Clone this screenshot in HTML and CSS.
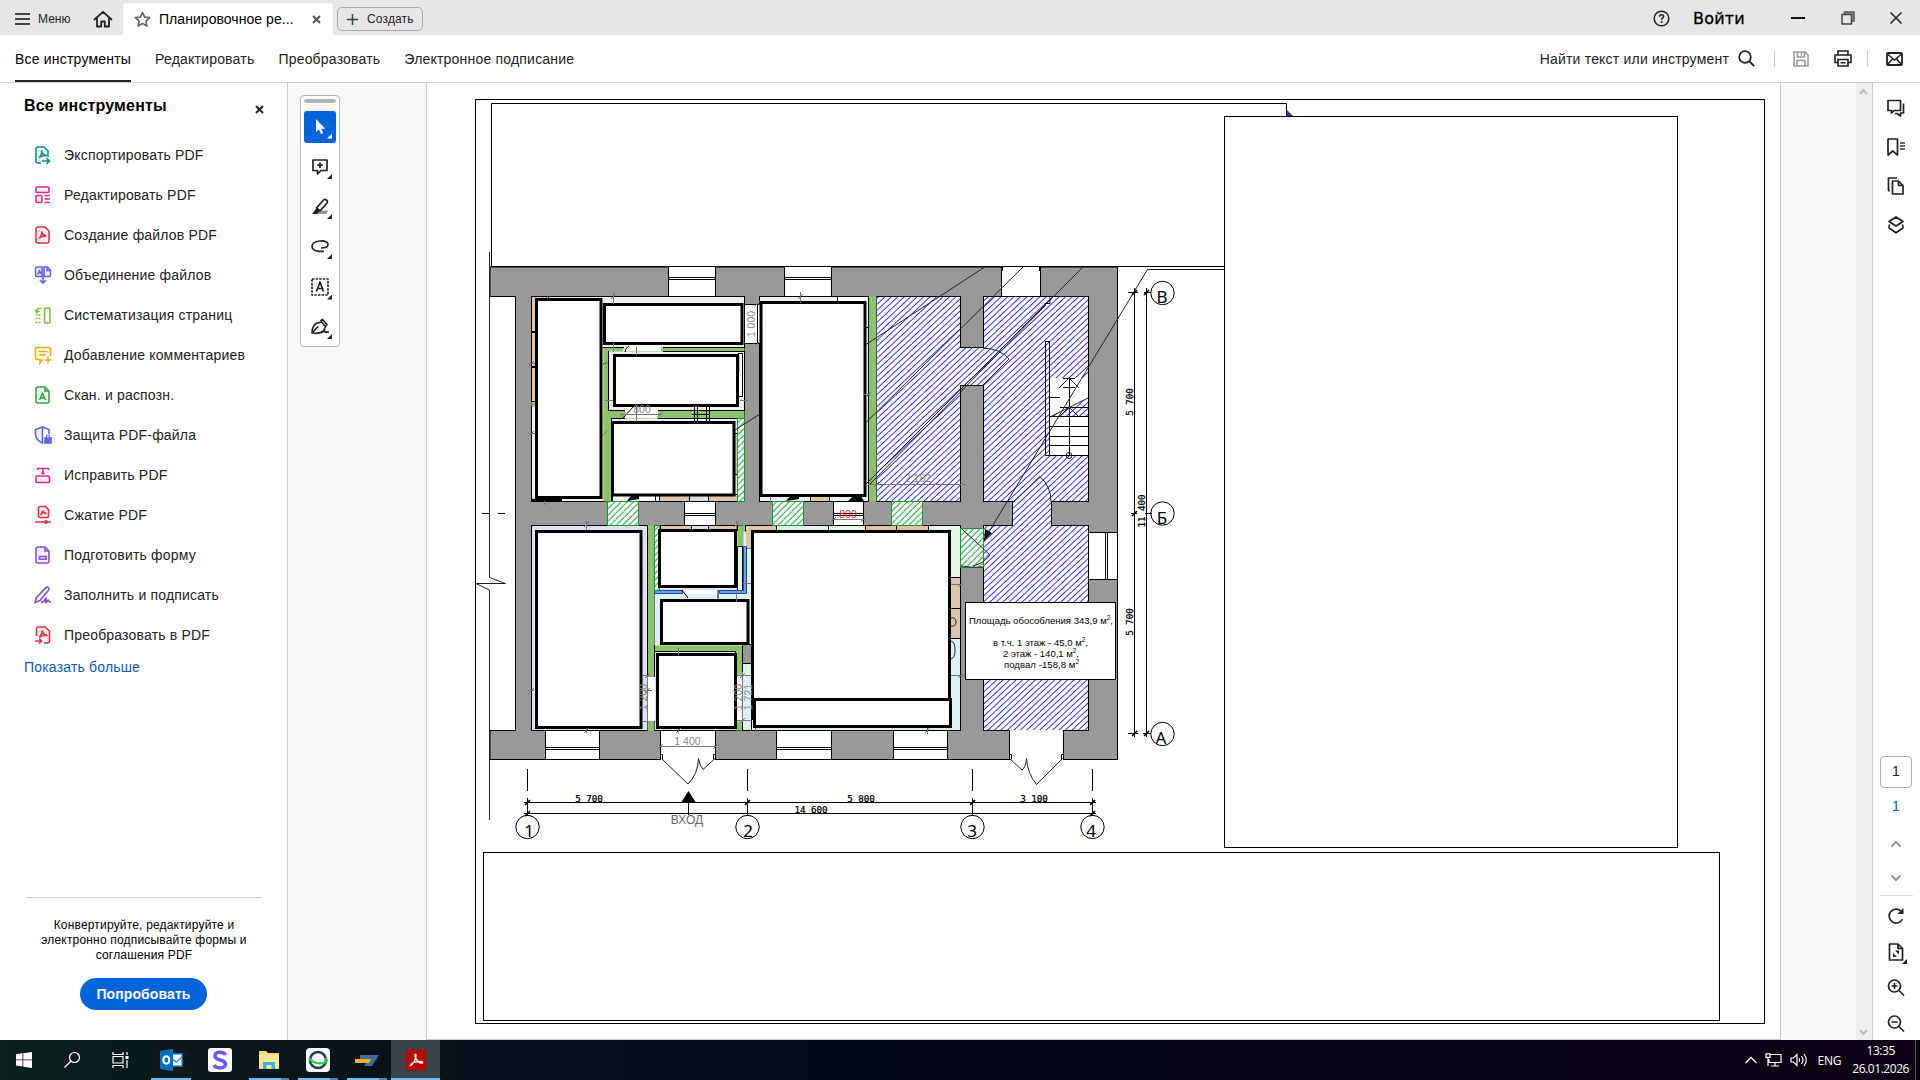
FILE: index.html
```html
<!DOCTYPE html>
<html lang="ru">
<head>
    <meta charset="UTF-8">
    <meta name="viewport" content="width=device-width, initial-scale=1.0">
    <title>Планировочное решение</title>
    <link rel="stylesheet" href="styles.css">
</head>
<body>
    <!-- Title bar -->
    <header class="titlebar">
        <div class="menu">
            <svg width="16" height="14" viewBox="0 0 16 14"><path d="M0 2h15M0 7h15M0 12h15" stroke="#444" stroke-width="1.8"/></svg>
            <span>Меню</span>
        </div>
        <svg class="home" width="20" height="18" viewBox="0 0 20 18"><path d="M1.5 9.5 10 1.8l8.500 7.700M4 8v8.500h4.200v-5h3.600v5H16V8" fill="none" stroke="#222" stroke-width="1.8" stroke-linejoin="round" stroke-linecap="round"/></svg>
        <div class="tab">
            <svg width="17" height="17" viewBox="0 0 17 17"><path d="M8.500 1.500l2.100 4.600 5 .6-3.700 3.400 1 5-4.400-2.500-4.400 2.500 1-5L1.400 6.700l5-.6z" fill="none" stroke="#666" stroke-width="1.700" stroke-linejoin="round"/></svg>
            <span class="tab-name">Планировочное ре...</span>
            <svg class="tab-close" width="9" height="9" viewBox="0 0 9 9"><path d="M1 1l7 7M8 1L1 8" stroke="#555" stroke-width="1.800"/></svg>
        </div>
        <button class="create">
            <svg width="11" height="11" viewBox="0 0 11 11"><path d="M5.500 0v11M0 5.500h11" stroke="#444" stroke-width="1.600"/></svg>
            <span>Создать</span>
        </button>
        <div class="window-controls">
            <svg class="help" width="17" height="17" viewBox="0 0 17 17"><circle cx="8.500" cy="8.500" r="7.300" fill="none" stroke="#222" stroke-width="1.500"/><path d="M6.500 6.700c0-1.400.9-2 2-2s2.100.7 2.100 1.800c0 1.400-2 1.500-2 3.200" fill="none" stroke="#222" stroke-width="1.500"/><circle cx="8.600" cy="12" r="1" fill="#222"/></svg>
            <span class="login">Войти</span>
            <svg class="wmin" width="14" height="14" viewBox="0 0 14 14"><path d="M0 7h14" stroke="#111" stroke-width="2"/></svg>
            <svg class="wmax" width="14" height="14" viewBox="0 0 14 14"><path d="M3.500 3.500v-2.500h9.500v9h-2.500" fill="#999" stroke="#555" stroke-width="1.500"/><path d="M1 3.500h9.500V13H1z" fill="#e6e6e6" stroke="#444" stroke-width="1.500"/></svg>
            <svg class="wclose" width="12" height="12" viewBox="0 0 12 12"><path d="M.5.5l11 11M11.500.5l-11 11" stroke="#222" stroke-width="1.500"/></svg>
        </div>
    </header>

    <!-- Main toolbar -->
    <nav class="toolbar">
        <a class="active">Все инструменты</a>
        <a>Редактировать</a>
        <a>Преобразовать</a>
        <a>Электронное подписание</a>
        <div class="toolbar-right">
            <span class="find">Найти текст или инструмент</span>
            <svg width="17" height="17" viewBox="0 0 17 17"><circle cx="7" cy="7" r="5.800" fill="none" stroke="#222" stroke-width="1.700"/><path d="M11.200 11.200l5 5" stroke="#222" stroke-width="1.900"/></svg>
            <i class="sep sep-first"></i>
            <svg class="save" width="16" height="16" viewBox="0 0 16 16"><path d="M1 1h11l3 3v11H1zM4.500 1v5h7V1M4 15v-5.500h8V15M8.500 2v2.500" fill="none" stroke="#999" stroke-width="1.600"/></svg>
            <svg class="print" width="18" height="17" viewBox="0 0 18 17"><path d="M4 5V1h10v4M4 12.500H1V5h16v7.500h-3M4 9.500h10V16H4zM6.500 12.700h5" fill="none" stroke="#222" stroke-width="1.600"/></svg>
            <i class="sep"></i>
            <svg class="mail" width="17" height="14" viewBox="0 0 17 14"><rect x="1" y="1" width="15" height="12" rx="1" fill="none" stroke="#222" stroke-width="1.800"/><path d="M1.500 2l7 6 7-6M1.500 12.500l5-5.500M15.500 12.500l-5-5.500" fill="none" stroke="#222" stroke-width="1.600"/></svg>
        </div>
    </nav>

    <main class="workspace">
        <!-- Tools panel -->
        <aside class="tools">
            <div class="tools-head">
                <h2>Все инструменты</h2>
                <svg width="9" height="9" viewBox="0 0 9 9"><path d="M1 1l7 7M8 1L1 8" stroke="#222" stroke-width="2"/></svg>
            </div>
            <ul>
                <li><svg class="teal" viewBox="0 0 20 20"><path d="M8 18H5a2 2 0 0 1-2-2V4a2 2 0 0 1 2-2h6l4 4v6" class="soft"/><path d="M6 13c2-2 3-5 2.500-7.500C9 8.500 11 10.500 14 10.500M6 12.500c2-1.200 4-1.800 7-2M9 16h7M13.500 13l3 3-3 3"/></svg>Экспортировать PDF</li>
                <li><svg class="pink" viewBox="0 0 20 20"><rect x="3" y="2" width="13" height="5.500" rx="1" class="soft"/><rect x="3" y="10.500" width="6" height="7" rx="1" class="soft"/><path d="M11.500 10.500H17M11.500 14H17M11.500 17.500H17"/></svg>Редактировать PDF</li>
                <li><svg class="red" viewBox="0 0 20 20"><path d="M5 2h7l4 4v10a2 2 0 0 1-2 2H5a2 2 0 0 1-2-2V4a2 2 0 0 1 2-2z" class="soft"/><path d="M6 13.500c2-2 3-5 2.800-7C9.500 9 11 10.800 13.500 11M6 13c2-1.400 4-2 7-2"/></svg>Создание файлов PDF</li>
                <li><svg class="indigo" viewBox="0 0 20 20"><path d="M9 11.500H4a1.500 1.500 0 0 1-1.500-1.500V3.500A1.500 1.500 0 0 1 4 2h5zM11 11.500h5a1.500 1.500 0 0 0 1.500-1.500V5l-3-3H11zM4.500 9.500c1.200-1 1.800-3 1.800-4.500.4 2 1 3 2.300 3.500M14 2v3.500h3.500" class="soft"/><path d="M10 9v9M7 15l3 3.200 3-3.200"/></svg>Объединение файлов</li>
                <li><svg class="green" viewBox="0 0 20 20"><rect x="11.500" y="3" width="5.500" height="15" rx="1" class="soft"/><path d="M2.500 10h6M2.500 13.500h6M2.500 17.500h6" stroke-dasharray="2 1"/><path d="M8.500 3.500C5.500 2.500 3.800 4 3.500 7M2 4.500L3.500 7.500 6.500 6"/></svg>Систематизация страниц</li>
                <li><svg class="yellow" viewBox="0 0 20 20"><path d="M9.500 14.500L7 18v-3.500H4A1.500 1.500 0 0 1 2.500 13V4A1.500 1.500 0 0 1 4 2.500h12A1.500 1.500 0 0 1 17.500 4v7" class="soft"/><path d="M5.500 6.500h9M5.500 10h7M15 11.500v7M11.500 15h7"/></svg>Добавление комментариев</li>
                <li><svg class="emerald" viewBox="0 0 20 20"><path d="M5 2h7l4 4v10a2 2 0 0 1-2 2H5a2 2 0 0 1-2-2V4a2 2 0 0 1 2-2zM12 2v4h4" class="soft"/><path d="M6.500 15l3-6.500 3 6.500M7.500 13h4"/></svg>Скан. и распозн.</li>
                <li><svg class="indigo" viewBox="0 0 20 20"><path d="M9.500 18C4 15.500 2.500 13 2.500 9V4.500L9.500 2z" class="soft"/><path d="M9.500 2L16 4.500V9"/><rect x="12" y="13" width="6" height="5" fill="currentColor"/><path d="M13.500 13v-1.500a1.500 1.500 0 0 1 3 0V13" stroke-width="1.200"/></svg>Защита PDF-файла</li>
                <li><svg class="pink" viewBox="0 0 20 20"><rect x="3" y="11" width="13.500" height="6.500" rx="1" class="soft"/><path d="M4.500 5V3.500h11V5M10 3.500V8.500M8 8.500h4"/></svg>Исправить PDF</li>
                <li><svg class="red" viewBox="0 0 20 20"><path d="M6.500 1.500h6l3 3v7a1 1 0 0 1-1 1h-8a1 1 0 0 1-1-1v-9a1 1 0 0 1 1-1z" class="soft"/><path d="M7.500 10c1.500-1 2-3 2.200-4.500.5 2 1.500 3 4 3M2 17h16"/><circle cx="13" cy="17" r="1.300" fill="currentColor"/></svg>Сжатие PDF</li>
                <li><svg class="violet" viewBox="0 0 20 20"><path d="M5 2h7l4 4v10a2 2 0 0 1-2 2H5a2 2 0 0 1-2-2V4a2 2 0 0 1 2-2zM12 2v4h4" class="soft"/><path d="M6.500 11.500h6.500v2.700H6.500z"/></svg>Подготовить форму</li>
                <li><svg class="violet" viewBox="0 0 20 20"><path d="M2 17.500l1.500-5L13 2.500c2-1.200 4 .8 2.700 2.500L7 15.500l-5 2z" class="soft"/><path d="M8 17.500c3.500 0 4-4.500 5-4.500s-1.500 4.500 0 4.500 1-2.500 2-2.500 0 2 3 2"/></svg>Заполнить и подписать</li>
                <li><svg class="red" viewBox="0 0 20 20"><path d="M3.500 11V4a2 2 0 0 1 2-2H12l4.500 4v10a2 2 0 0 1-2 2H11" class="soft"/><path d="M6.500 12c2-2 3-4 2.800-6.500C10 9 12 10.500 14.500 10.500M6 12c2-1 4-1.500 7-1.500M2 16h6.500M6 13.500L8.500 16 6 18.500"/></svg>Преобразовать в PDF</li>
            </ul>
            <a class="more">Показать больше</a>
            <div class="promo">
                <p>Конвертируйте, редактируйте и<br>электронно подписывайте формы и<br>соглашения PDF</p>
                <button>Попробовать</button>
            </div>
        </aside>

        <!-- Quick tools -->
        <div class="quick-area">
            <div class="quick">
                <i class="handle"></i>
                <div class="quick-btn selected"><svg viewBox="0 0 32 32"><path d="M12 8v13l3-2.500 2 4.500 2.300-1-2-4.300h4z" fill="#fff"/><path d="M28 22.500v5h-5z" fill="#fff"/></svg></div>
                <div class="quick-btn"><svg viewBox="0 0 32 32"><path d="M9 9h14v10.500h-6L13.500 23v-3.500H9z" class="ln"/><path d="M16 11.500v5.500M13.300 14.200h5.400" class="ln"/><path d="M28 23v5h-5z"/></svg></div>
                <div class="quick-btn"><svg viewBox="0 0 32 32"><path d="M17 19.500h7.500L22 23h-9z" fill="#999"/><path d="M12.500 17l7-8c1.500-1.500 5 .5 3.500 3l-7 8zM12 17.500l3.500 3" class="ln"/><path d="M12 18l3 3-1.500 2H8z"/><path d="M28 23v5h-5z"/></svg></div>
                <div class="quick-btn"><svg viewBox="0 0 32 32"><path d="M17 17c5 0 7-1.500 7-3.500 0-3-4-4-8-3.500-5 .6-8 3-8 5.500s3 4.800 7 4.800h5" class="ln"/><path d="M28 23v5h-5z"/></svg></div>
                <div class="quick-btn"><svg viewBox="0 0 32 32"><rect x="8" y="8" width="16" height="16" class="ln" stroke-dasharray="2.400 1.200"/><path d="M12.500 20.500l3.500-9.500 3.500 9.500M13.500 17.500h5" class="ln"/><path d="M28 23.500v5h-5z"/></svg></div>
                <div class="quick-btn"><svg viewBox="0 0 32 32"><path d="M8 22c0-5 1-8 5-10l4.500-1 4 4.500-2 4.500c-3 2-7 3-11.500 2zM8 22l6-6.500M16.500 10l2-1.500 4.500 5-1.500 2M17 22c2-1 3-2 3.500-2s0 1.500 1 1.500 1-1 3.500-.5" class="ln"/><path d="M28 23v5h-5z"/></svg></div>
            </div>
        </div>

        <!-- Document page -->
        <section class="page">
            <svg class="plan" viewBox="427 83 1353 956" width="1353" height="956">
                <defs>
                    <pattern id="hb" width="4.400" height="4.400" patternUnits="userSpaceOnUse" patternTransform="rotate(-43)"><path d="M0 2.200h4.400" stroke="#2626ff" stroke-width="0.950"/></pattern>
                    <pattern id="hg" width="4.400" height="4.400" patternUnits="userSpaceOnUse" patternTransform="rotate(-45)"><rect width="4.400" height="4.400" fill="#fff"/><path d="M0 2h4.400" stroke="#16a035" stroke-width="1"/></pattern>
                </defs>

                <!-- frames -->
                <g class="frame">
                    <rect x="475.500" y="99.500" width="1289" height="924"/>
                    <path d="M1286.500 117V103.500H491.500V266.500H1224"/>
                    <rect x="1224.500" y="116.500" width="453" height="731"/>
                    <rect x="483.500" y="852.500" width="1236" height="168"/>
                </g>
                <path d="M1287 110l6 6h-6z" fill="#1c3fa8"/>

                <!-- walls -->
                <path class="wall" d="M490 267H1117.500V759.500H490V730.500H515.500V296.500H490z"/>
                <!-- rooms -->
                <g class="room">
                    <rect x="531.500" y="296.500" width="213" height="205" fill="#efefef"/>
                    <rect x="759.500" y="296.500" width="109" height="205" fill="#efefef"/>
                    <rect x="531.500" y="525.500" width="116" height="205" fill="#dde3f1"/>
                    <rect x="654.500" y="525.500" width="88" height="205" fill="#dde3f1"/>
                    <rect x="745.500" y="525.500" width="215" height="205" fill="#dcf1f1"/>
                    <rect x="876.500" y="296.500" width="84" height="205" fill="#fff"/>
                    <rect x="983.500" y="296.500" width="105" height="205" fill="#fff"/>
                    <rect x="983.500" y="525.500" width="105" height="205" fill="#fff"/>
                </g>
                <g fill="#fff">
                    <rect x="960" y="348" width="24" height="37"/>
                    <rect x="1013" y="501" width="38" height="26"/>
                </g>
                <path fill="url(#hb)" d="M877 297h83v51h24V297h104v204h-37v25h37v204H984V526h29v-25h-29V386h-24v115h-83z"/>
                <path class="thin" d="M960.500 347.500h23M960.500 385.500h23M1012.500 501v24M1051.500 501v24"/>

                <!-- green partitions -->
                <g class="part">
                    <rect x="868.500" y="296.500" width="8" height="205"/>
                    <rect x="603.500" y="347.500" width="5" height="154"/>
                    <rect x="603.500" y="418" width="8" height="83"/>
                    <rect x="603.500" y="347.500" width="141" height="4"/>
                    <rect x="603.500" y="410.500" width="141" height="8"/>
                    <rect x="647.500" y="525.500" width="7" height="151"/>
                    <rect x="647.500" y="721.500" width="7" height="9"/>
                    <rect x="737.500" y="525.500" width="8" height="21"/>
                    <rect x="735.500" y="651.500" width="7" height="23"/>
                    <rect x="735.500" y="721.500" width="7" height="9"/>
                    <rect x="654.500" y="644.500" width="88" height="7"/>
                    <rect x="531.500" y="401.500" width="4" height="5"/>
                </g>
                <path class="thin" d="M868.500 297v204M603 347.500h22M663 347.500h82M663 351.500h82M608.500 351v59M608 410.500h17M658 410.500h87M611.500 418v83M611 418.500h14M658 418.500h87M744.500 351v60M647.500 526v150M654.500 593v83M654 644.500h89M654 651.500h82M735.500 651v23M742.500 651v23"/>
                <!-- furniture -->
                <g class="wood">
                    <rect x="531.500" y="296.500" width="17" height="35"/>
                    <rect x="531.500" y="332.500" width="5" height="34"/>
                    <rect x="531.500" y="367.500" width="5" height="34"/>
                    <rect x="659.500" y="494.500" width="30" height="7"/>
                    <rect x="708.500" y="494.500" width="30" height="7"/>
                    <rect x="730.500" y="433.500" width="7" height="41"/>
                    <rect x="810.500" y="494.500" width="19" height="7"/>
                    <rect x="660.500" y="525.500" width="31" height="5"/>
                    <rect x="708.500" y="525.500" width="29" height="5"/>
                    <rect x="745.500" y="525.500" width="31" height="23"/>
                    <rect x="865.500" y="525.500" width="31" height="6"/>
                    <rect x="896.500" y="525.500" width="32" height="6"/>
                    <rect x="949.500" y="577.500" width="11" height="31"/>
                    <rect x="949.500" y="608.500" width="11" height="30"/>
                </g>
                <g class="room">
                    <rect x="828.500" y="525.500" width="37" height="6" fill="#e4f6e4"/>
                    <rect x="689.500" y="494.500" width="19" height="7" fill="#ddd"/>
                    <path d="M928.500 525.500h32v52h-11v-46h-21z" fill="#e4f6e4"/>
                    <path d="M737.500 546.500h5v44h-5z" fill="#e4f6e4"/>
                    <path d="M654.500 593.500h89v-62h2.500v17h6v97h-97.500z" fill="#dcf1f1" stroke="none"/>
                    <path d="M654.500 590.500h28v3h-28zM719.500 590.500h24v-44h3v47h-27z" fill="#6f9ff5" stroke="#1f4690"/>
                    <rect x="742.500" y="644.500" width="9" height="19" fill="#999"/>
                    <rect x="742.500" y="663.500" width="9" height="67" fill="#dcf1f1"/>
                    <rect x="738.500" y="353.500" width="4" height="43" fill="#fff"/>
                    <rect x="612.500" y="495.500" width="43" height="6" fill="#fff"/>
                    <rect x="837.500" y="296.500" width="31" height="31" fill="#fff"/>
                </g>
                <g fill="#fff">
                    <path d="M625 345h36v6h-38zM625 407h33v11h-33zM648 677h7v44h-7zM736 675h6v46h-6zM683 590h36v4h-36z"/>
                    <rect x="745" y="304" width="15" height="39"/>
                </g>
                <path class="thin" d="M744.500 304.500h15M744.500 343.500h15M757.500 304v39M691.500 410.500h18M691.500 414.500h18M694.500 407v14M697.500 407v14M706.500 407v14M709.500 407v14M625 352q0-4 4-6M623 418l11-12M682 590l6 8M718 590v9M866 327.500h3"/>
                <path d="M627 501q5-8 12-6v4zM786 501q6-8 13-6v4zM848 501q6-7 12-6l4 6z" fill="#000"/>
                <path d="M532 500h30M738 354v18" stroke="#000" stroke-width="2.500"/>

                <!-- openings and windows -->
                <g class="opening">
                    <rect x="668.500" y="266.500" width="47" height="30"/>
                    <rect x="784.500" y="266.500" width="47" height="30"/>
                    <rect x="684.500" y="501.500" width="31" height="24"/>
                    <rect x="833.500" y="501.500" width="30" height="24"/>
                    <rect x="545.500" y="730.500" width="54" height="29"/>
                    <rect x="776.500" y="730.500" width="55" height="29"/>
                    <rect x="893.500" y="730.500" width="54" height="29"/>
                    <rect x="1088.500" y="532.500" width="29" height="47"/>
                    <path d="M668 277.500h48M668 279.500h48M784 277.500h48M784 279.500h48M684 513.500h32M684 515.500h32M833 513.500h31M833 515.500h31M545 747.500h55M545 749.500h55M776 747.500h56M776 749.500h56M893 747.500h55M893 749.500h55M1105.500 532v48M1107.500 532v48M660.500 731v28M715.500 731v28M1009.500 731v28M1063.500 731v28M1001.500 267v29M1040.500 267v29"/>
                </g>
                <g fill="#fff">
                    <rect x="661" y="731" width="54" height="30"/>
                    <rect x="1010" y="730" width="53" height="31"/>
                    <rect x="1002" y="267" width="38" height="29"/>
                </g>
                <path class="thin" d="M491 266.500H1224"/>
                <g class="hatch">
                    <rect x="607.500" y="501.500" width="31" height="24"/>
                    <rect x="772.500" y="501.500" width="31" height="24"/>
                    <rect x="891.500" y="501.500" width="31" height="24"/>
                    <rect x="960.500" y="528.500" width="23" height="39"/>
                    <rect x="737.500" y="418.500" width="7" height="83"/>
                    <rect x="654.500" y="525.500" width="5" height="65"/>
                </g>

                <!-- covered rooms -->
                <g class="cover">
                    <rect x="536.500" y="299.500" width="64.500" height="198"/>
                    <rect x="604.500" y="304.500" width="137.500" height="39"/>
                    <rect x="614.500" y="355.500" width="123" height="50"/>
                    <rect x="612.500" y="422.500" width="121.500" height="72.500"/>
                    <rect x="761" y="302.500" width="104" height="193"/>
                    <rect x="536.500" y="531.500" width="104.500" height="196"/>
                    <rect x="659.500" y="530.500" width="76" height="56"/>
                    <rect x="661.500" y="600.500" width="86.500" height="43"/>
                    <rect x="657.500" y="654.500" width="78" height="73"/>
                    <rect x="752.500" y="531.500" width="97" height="187"/>
                    <rect x="752.500" y="531.500" width="197" height="167"/>
                    <rect x="754.500" y="699.500" width="196" height="27"/>
                </g>
                <path d="M754 533h194v165H754z" fill="#fff"/>

                <!-- stairs -->
                <path d="M1050 378h38v20l-38 19z" fill="#fff"/>
                <rect x="1050" y="417" width="38" height="38" fill="#fff"/>
                <path class="thin" d="M1045.500 341.500h4v114h-4z"/>
                <path class="thin" d="M1050 397.500h10M1060 407.500h28M1050 416.500h38M1050 426.500h38M1050 436.500h38M1050 445.500h38M1050 455.500h38M1069.500 378v77M1063 378.500h12M1063 387.500h12"/>
                <path class="slant" d="M1059 388l10-10 10 10M1060 416l9-9 9 9M1050 417l38-19"/>
                <circle class="slant" cx="1069" cy="455.500" r="3"/>

                <!-- leaders and doors -->
                <path class="slant" d="M866 344.500L984 267.500M866 422.500L1023 267M866 484L1083 267M870 484L1046 305M735 430l25-16M1224 269.500h-76.500L984 540M983 348q18 1 26 11l-26 26M1014 501.500l26-25q11 10 11 25M984 567q-12 1-23-1M962 529l28 26q-6 8-17 11"/>
                <path d="M984 541l1-12 7 4z" fill="#000"/>
                <path class="slant" d="M662 759l26 25q10-10 10.500-25.500 1 7 4.500 11l12-11M1010 759l12 11q4-3 4.500-11.500 1 15 10 26l26-26"/>
                <path class="thin" d="M660.500 754.500h2v5M715.500 754.500h-2v5M1009.500 754.500h2v5M1063.500 754.500h-2v5M1002.500 267v4M1039.500 267v4M1045 303.500h5v-6"/>

                <!-- break line -->
                <path class="slant" d="M489.500 252v325.500l16 6h-29.500l13.500 6.500v230"/>
                <path class="thin" d="M482 513.500h8M498 513.500h7"/>

                <!-- axes and dimensions -->
                <path class="thin" d="M1134.500 288v449M1146.500 288v449M524 802.500h572M524 813.500h572M1128 292.500h10M1144 292.500h7M1131 513.500h6M1145 513.500h7M1128 733.500h10M1143 733.500h8M527.500 769v22M747.500 769v22M972.500 769v22M1092.500 769v22M527.500 798v18M747.500 798v18M972.500 798v18M1092.500 798v18M688.500 800v15"/>
                <path class="tick" d="M1132 295l5-5M1144 295l5-5M1132 516l5-5M1132 736l5-5M1144 736l5-5M525 805l5-5M745 805l5-5M970 805l5-5M1090 805l5-5M525 816l5-5M1090 816l5-5"/>
                <path d="M688.500 791l-7 11h14z" fill="#000"/>
                <g class="axis">
                    <circle cx="1162.500" cy="293" r="11.700"/><circle cx="1162.500" cy="513.500" r="11.700"/><circle cx="1162.500" cy="734" r="11.700"/>
                    <circle cx="527.500" cy="827" r="11.700"/><circle cx="747.500" cy="827" r="11.700"/><circle cx="972.500" cy="827" r="11.700"/><circle cx="1092.500" cy="827" r="11.700"/>
                </g>
                <g class="axis-text">
                    <text x="1162" y="303">В</text><text x="1162" y="524">Б</text><text x="1161" y="744">А</text>
                    <text x="529" y="836.500">1</text><text x="748" y="836.500">2</text><text x="972" y="836.500">3</text><text x="1091" y="836.500">4</text>
                </g>
                <g class="dim">
                    <text x="589" y="802">5 700</text><text x="861" y="802">5 800</text><text x="1034" y="802">3 100</text><text x="811" y="812.500">14 600</text>
                    <text transform="translate(1133 402) rotate(-90)">5 700</text>
                    <text transform="translate(1133 622) rotate(-90)">5 700</text>
                    <text transform="translate(1145 511) rotate(-90)">11 400</text>
                </g>
                <path class="gray-line" d="M613.500 292v12M800.500 292v11M613.500 343v9M636.500 347v8M528 363.500h7M528 433.500h7M602 363.500h6M605 400.500h8M740 400.500h8M620 414.500h42M636.500 406v16M868 484.500h97M586.500 521v9M586.500 728v5M736.500 521v8M736.500 590v12M678.500 648v7M678.500 729v4M642 675.500h8M642 721.500h8M647.500 675v46M642 690.500h10M737 675.500h14M742.500 672v50M737 720.500h14M660 746.500h56M832 519.500h33M743 583.500h8M951 584.500h12M951 675.500h14M927.500 728v6M755.500 728v5M528 690.500h6M863 394.500h7M544.500 501v4M770.500 497v8"/>
                <path class="gray-tick" d="M611 299l5-5M798 299l5-5M529 366l5-5M529 436l5-5M602 366l5-5M602 436l5-5M866 397l5-5M621 417l5-5M657 417l5-5M866 487l5-5M874 487l5-5M958 487l5-5M584 527l5-5M734 527l5-5M584 733l5-5M676 733l5-5M658 749l5-5M713 749l5-5M831 522l5-5M861 522l5-5M529 693l5-5M645 678l5-5M645 693l5-5M740 678l5-5M740 723l5-5M958 587l5-5M958 678l5-5M925 733l5-5M755 306l5-5M755 346l5-5"/>
                <g class="room-dim">
                    <text x="687.500" y="744.500">1 400</text><text x="918" y="482">2 182</text><text x="642" y="413">800</text>
                    <text transform="translate(755 324) rotate(-90)">1 000</text>
                    <text transform="translate(647 697) rotate(-90)">1 200</text>
                    <text transform="translate(742 697) rotate(-90)">1 200</text>
                    <text transform="translate(752 697) rotate(-90)">1 721</text>
                </g>
                <text class="red-dim" x="848" y="518">800</text>
                <text class="entry" x="687" y="824">ВХОД</text>
                <path class="slant" d="M951 618q5-1 5 4t-5 4M951 641q4 1 4 9t-4 9"/>

                <!-- area note -->
                <rect class="note" x="965.500" y="602.500" width="150" height="77"/>
                <g class="note-text">
                    <text x="969" y="624" textLength="144">Площадь обособления 343,9 м<tspan class="sup" dy="-4">2</tspan><tspan dy="4">,</tspan></text>
                    <text x="993" y="646" textLength="95">в т.ч. 1 этаж - 45,0 м<tspan class="sup" dy="-4">2</tspan><tspan dy="4">,</tspan></text>
                    <text x="1003" y="657" textLength="76">2 этаж - 140,1 м<tspan class="sup" dy="-4">2</tspan><tspan dy="4">,</tspan></text>
                    <text x="1004" y="668" textLength="75">подвал -158,8 м<tspan class="sup" dy="-4">2</tspan></text>
                </g>
            </svg>
        </section>

        <div class="gutter"></div>
        <div class="scrollbar">
            <svg width="9" height="6" viewBox="0 0 9 6"><path d="M1 5l3.500-4L8 5" fill="none" stroke="#bbb" stroke-width="2"/></svg>
            <svg width="9" height="6" viewBox="0 0 9 6"><path d="M1 1l3.500 4L8 1" fill="none" stroke="#bbb" stroke-width="2"/></svg>
        </div>

        <!-- Right rail -->
        <aside class="rail">
            <div class="rail-top">
                <svg viewBox="0 0 20 20"><path d="M2 2.500h12.500v10H8L5.500 15v-2.500H2z" class="ln"/><path d="M17.500 5.500v9.500h-3v3L11 15.500H9" class="ln"/></svg>
                <svg viewBox="0 0 20 20"><path d="M2 2h9.500v16L6.700 14 2 18z" class="ln"/><path d="M14 6h5M14 9h5M14 12h5" stroke="#666" stroke-width="1.800"/></svg>
                <svg viewBox="0 0 20 20"><path d="M6.500 5h6l4.500 4.500V18H6.500zM12.500 5v4.500H17M3.500 15.500L2.500 14V2H11" class="ln"/></svg>
                <svg viewBox="0 0 20 20"><path d="M10 2l7 4.500-7 4.500-7-4.500zM3.500 9.500L3 13l7 4.800L17 13l-.5-3.500" class="ln"/></svg>
            </div>
            <div class="rail-bottom">
                <div class="page-box">1</div>
                <div class="page-total">1</div>
                <svg class="chev" viewBox="0 0 12 8"><path d="M1.500 6.500L6 2l4.500 4.500"/></svg>
                <svg class="chev down" viewBox="0 0 12 8"><path d="M1.500 1.500L6 6l4.500-4.500"/></svg>
                <i class="line"></i>
                <svg class="ric" viewBox="0 0 20 20"><path d="M15.500 5.500A7 7 0 1 0 16.500 13" class="ln"/><path d="M17.500 2v6h-6z"/></svg>
                <svg class="ric" viewBox="0 0 20 20"><path d="M3.500 2h8.500l4.500 4.500V18h-13zM12 2v4.500h4.500" class="ln"/><path d="M13 8.500v4l-4-4zM7 11v4h4z"/><path d="M21 17v5h-5z"/></svg>
                <svg class="ric" viewBox="0 0 20 20"><circle cx="8.500" cy="8" r="6" class="ln"/><path d="M8.500 5v6M5.500 8h6M13 12.500l5 5" class="ln"/></svg>
                <svg class="ric" viewBox="0 0 20 20"><circle cx="8.500" cy="8" r="6" class="ln"/><path d="M5.500 8h6M13 12.500l5 5" class="ln"/></svg>
            </div>
        </aside>
    </main>

    <!-- Taskbar -->
    <footer class="taskbar">
        <div class="sys"><svg width="16" height="16" viewBox="0 0 16 16"><path d="M0 2.200l6.500-.9v6.200H0zM7.300 1.200L16 0v7.500H7.300zM0 8.300h6.500v6.200L0 13.600zM7.300 8.300H16V16l-8.700-1.200z" fill="#fff"/></svg></div>
        <div class="sys"><svg width="16" height="16" viewBox="0 0 16 16"><circle cx="10.500" cy="5.500" r="5" fill="none" stroke="#fff" stroke-width="1.200"/><path d="M6.800 9.200L.5 15.500" stroke="#fff" stroke-width="1.300"/></svg></div>
        <div class="sys"><svg width="17" height="16" viewBox="0 0 17 16"><path d="M1 0v2.500h10V0M1 16v-2.500h10V16M1 4.500h10v6.500H1zM15 0v3M15 8v8" fill="none" stroke="#fff" stroke-width="1.200"/><rect x="13.500" y="4" width="3" height="3" fill="#fff"/></svg></div>
        <div class="apps">
            <div class="app open"><svg viewBox="0 0 24 24"><rect x="12" y="6" width="11" height="12" fill="#fff"/><path d="M12 6h11v3l-5.500 5L12 10M12 18h11v-7" fill="none" stroke="#2a8dd4" stroke-width="1.500"/><path d="M1 3l13-2v22L1 21z" fill="#0072c6"/><ellipse cx="7.300" cy="12" rx="3" ry="3.700" fill="none" stroke="#fff" stroke-width="2"/></svg></div>
            <div class="app"><svg viewBox="0 0 24 24"><rect width="24" height="24" rx="3" fill="#fff"/><path d="M17.500 7C16 3.500 7 3 7 8c0 5 10.500 3 10.500 8 0 5-9.500 5-11.500 1" fill="none" stroke="#6a5cf5" stroke-width="3.500"/></svg></div>
            <div class="app open multi"><svg viewBox="0 0 24 24"><path d="M2 3h7l2 2h11v16H2z" fill="#f7d774"/><path d="M2 7h20v13H2z" fill="#ffe694"/><path d="M6 21v-7h12v7h-3.500v-4h-5v4z" fill="#38aee4"/></svg></div>
            <div class="app open multi"><svg viewBox="0 0 24 24"><rect width="24" height="24" rx="4" fill="#fff"/><circle cx="12" cy="12" r="8" fill="none" stroke="#263c48" stroke-width="2.500"/><path d="M3 10c3 5 12 7 17 4 2-1.500.5-3-1.500-3.500" fill="none" stroke="#1bcf4e" stroke-width="2.200"/></svg></div>
            <div class="app open multi"><svg viewBox="0 0 24 24"><path d="M5 7h19l-7 11H9l3-4H5z" fill="#3c6e9c"/><path d="M0 11h16l-2 4H0z" fill="#f5b324"/></svg></div>
            <div class="app open current"><svg viewBox="0 0 24 24"><rect x="1.500" y="1.500" width="21" height="21" rx="4" fill="#b30b00"/><path d="M6.500 17.500c2.500-.5 6-7 5.500-11-1.500-1-1.500 1.500 0 4 1.500 3 4 5 6 4.500s-.5-2-4-1.500-7 2-7.500 4z" fill="none" stroke="#fff" stroke-width="1.300"/></svg></div>
        </div>
        <div class="tray">
            <svg width="12" height="8" viewBox="0 0 12 8"><path d="M.5 7L6 1.500 11.500 7" fill="none" stroke="#fff" stroke-width="1.300"/></svg>
            <svg width="17" height="14" viewBox="0 0 17 14"><path d="M5 1.500h11v8H4V6M6 13h8M10 9.500V13M1 .8h4v3.500H1zM3 4.500V13" fill="none" stroke="#fff" stroke-width="1.200"/></svg>
            <svg width="17" height="14" viewBox="0 0 17 14"><path d="M1 5h2.500L7 1.500v11L3.500 9H1zM9 5q1.500 2 0 4M11.500 3q3 4 0 8M14 1q4.500 6 0 12" fill="none" stroke="#fff" stroke-width="1.200"/></svg>
            <span class="lang">ENG</span>
            <div class="clock">13:35<br>26.01.2026</div>
        </div>
    </footer>
</body>
</html>
```

FILE: styles.css
```css
* {
    box-sizing: border-box;
}
body {
    margin: 0;
    width: 1920px;
    height: 1080px;
    overflow: hidden;
    display: flex;
    flex-direction: column;
    font-family: "Liberation Sans", Arial, sans-serif;
    font-size: 14px;
    color: #222;
    background: #fff;
}
svg {
    display: block;
    flex: none;
    overflow: visible;
}
button {
    font-family: inherit;
    padding: 0;
}
.ln {
    fill: none;
    stroke: #222;
    stroke-width: 1.7;
    stroke-linejoin: round;
}

/* title bar */
.titlebar {
    height: 35px;
    flex: none;
    display: flex;
    align-items: center;
    background: #e6e6e6;
    padding-left: 15px;
}
.menu {
    display: flex;
    align-items: center;
    gap: 7px;
    width: 78px;
    font-size: 12px;
    padding-top: 2px;
}
.home {
    margin-top: 2px;
}
.tab {
    display: flex;
    align-items: center;
    align-self: flex-end;
    width: 210px;
    height: 32px;
    margin-left: 10px;
    padding: 0 12px 0 11px;
    background: #fff;
    border-radius: 4px 4px 0 0;
    color: #000;
}
.tab-name {
    margin-left: 8px;
    white-space: nowrap;
    letter-spacing: 0.05px;
}
.tab-close {
    margin-left: auto;
}
.create {
    display: flex;
    align-items: center;
    gap: 9px;
    width: 86px;
    height: 24px;
    margin: 3px 0 0 4px;
    padding-left: 9px;
    border: 1px solid #aaa;
    border-radius: 5px;
    background: transparent;
    font-size: 12px;
    letter-spacing: 0.15px;
    color: #222;
}
.window-controls {
    display: flex;
    align-items: center;
    margin-left: auto;
    padding-right: 18px;
}
.help {
    margin-top: 2px;
}
.login {
    width: 52px;
    margin-left: 23px;
    padding-top: 2px;
    font-family: "DejaVu Sans", sans-serif;
    font-size: 16px;
    letter-spacing: 0.2px;
    color: #000;
    -webkit-text-stroke: 0.3px #000;
}
.wmin {
    margin-left: 46px;
}
.wmax {
    margin-left: 36px;
}
.wclose {
    margin-left: 35px;
}

/* toolbar */
.toolbar {
    height: 48px;
    flex: none;
    display: flex;
    gap: 24px;
    padding-left: 15px;
    border-bottom: 1px solid #d0d0d0;
    letter-spacing: 0.2px;
}
.toolbar a {
    padding-top: 1px;
    line-height: 46px;
    height: 47px;
    white-space: nowrap;
}
.toolbar .active {
    color: #000;
    border-bottom: 2px solid #222;
}
.toolbar-right {
    display: flex;
    align-items: center;
    margin-left: auto;
    padding-right: 17px;
}
.find {
    margin-right: 9px;
}
.sep {
    width: 1px;
    height: 16px;
    background: #ccc;
}
.sep-first {
    margin-left: 19px;
}
.save {
    margin-left: 18px;
}
.print {
    margin: 0 15px 0 25px;
}
.mail {
    margin-left: 18px;
}

/* workspace */
.workspace {
    flex: 1;
    min-height: 0;
    display: flex;
}
.tools {
    width: 288px;
    flex: none;
    display: flex;
    flex-direction: column;
    border-right: 1px solid #d0d0d0;
    letter-spacing: 0.18px;
}
.tools-head {
    display: flex;
    justify-content: space-between;
    align-items: center;
    height: 52px;
    padding: 0 23px 0 24px;
}
.tools-head h2 {
    margin: 0 0 7px;
    font-size: 16px;
    color: #000;
}
.tools ul {
    list-style: none;
    margin: 0;
    padding: 0 0 0 33px;
}
.tools li {
    display: flex;
    align-items: center;
    gap: 11px;
    height: 40px;
}
.tools li svg {
    width: 20px;
    height: 20px;
    fill: none;
    stroke: currentColor;
    stroke-width: 1.6;
}
.tools li svg .soft {
    fill: currentColor;
    fill-opacity: 0.1;
}
.teal { color: #12908f; }
.pink { color: #d42f8c; }
.red { color: #dc3545; }
.indigo { color: #6464e8; }
.green { color: #7cc142; }
.yellow { color: #d8b90c; }
.emerald { color: #37a84c; }
.violet { color: #8b52d0; }
.more {
    margin: 4px 0 0 24px;
    color: #0b5cb5;
}
.promo {
    margin: auto 25px 30px 26px;
    padding-top: 20px;
    border-top: 1px solid #ccc;
    text-align: center;
    font-size: 12px;
    line-height: 15px;
    color: #000;
}
.promo p {
    margin: 0 -10px 15px;
}
.promo button {
    width: 127px;
    height: 32px;
    margin-left: -1px;
    border: none;
    border-radius: 16px;
    background: #0265dc;
    color: #fff;
    font-size: 14px;
    font-weight: bold;
    letter-spacing: 0.1px;
}

/* quick tools */
.quick-area {
    width: 139px;
    flex: none;
    padding: 12px 0 0 12px;
    background: #f7f7f7;
    border-right: 1px solid #ccc;
}
.quick {
    width: 40px;
    height: 252px;
    padding: 3px 3px 0;
    display: flex;
    flex-direction: column;
    background: #fff;
    border: 1px solid #b3b3b3;
    border-radius: 4px;
}
.handle {
    flex: none;
    height: 4px;
    margin-bottom: 8px;
    background: #b1b1b1;
    border-radius: 2px;
}
.quick-btn {
    flex: none;
    height: 32px;
    margin-bottom: 8px;
}
.quick-btn:last-child {
    margin-bottom: 0;
}
.quick-btn svg {
    width: 32px;
    height: 32px;
    fill: #222;
}
.selected {
    background: #0265dc;
    border-radius: 3px;
}

/* document */
.page {
    width: 1353px;
    flex: none;
    border-bottom: 1px solid #ccc;
}
.plan {
    font-family: "Liberation Sans", Arial, sans-serif;
    overflow: hidden;
}
.frame, .axis {
    fill: none;
    stroke: #000;
}
.wall {
    fill: #999;
    stroke: #000;
}
.room, .wood, .opening {
    stroke: #000;
}
.part {
    fill: #8dc26c;
}
.wood {
    fill: #dcc6ab;
}
.opening, .note {
    fill: #fff;
    stroke: #000;
}
.thin {
    stroke: #000;
    fill: none;
}
.slant {
    fill: none;
    stroke: #222;
}
.hatch {
    fill: url(#hg);
    stroke: #109c2c;
}
.cover {
    fill: #fff;
    stroke: #000;
    stroke-width: 3;
}
.tick {
    stroke: #000;
    stroke-width: 1.6;
}
.gray-line, .gray-tick {
    stroke: #777;
}
.axis-text {
    font-family: "Noto Sans", sans-serif;
    font-size: 17px;
    text-anchor: middle;
}
.dim {
    font-family: "DejaVu Sans Mono", monospace;
    font-size: 9.2px;
    text-anchor: middle;
    stroke: #000;
    stroke-width: 0.25px;
}
.room-dim, .red-dim, .entry {
    font-size: 10.500px;
    fill: #888;
    text-anchor: middle;
}
.red-dim {
    fill: #e0202c;
}
.entry {
    font-size: 12px;
    fill: #666;
}
.note-text {
    font-size: 9.5px;
    fill: #000;
}
.sup {
    font-size: 6.5px;
}
.gutter {
    width: 76px;
    flex: none;
    background: #f7f7f7;
    border-left: 1px solid #ccc;
}
.scrollbar {
    width: 17px;
    flex: none;
    display: flex;
    flex-direction: column;
    justify-content: space-between;
    align-items: center;
    padding: 6px 1px 5px 0;
    background: #efefef;
    border-right: 1px solid #ccc;
}

/* right rail */
.rail {
    flex: 1;
    display: flex;
    flex-direction: column;
    justify-content: space-between;
    align-items: center;
    padding: 15px 1px 6px 0;
}
.rail-top {
    display: flex;
    flex-direction: column;
    gap: 19px;
}
.rail-top svg, .ric {
    width: 20px;
    height: 20px;
    fill: #222;
}
.rail-bottom {
    display: flex;
    flex-direction: column;
    align-items: center;
}
.page-box {
    width: 32px;
    height: 32px;
    border: 1px solid #aaa;
    border-radius: 4px;
    text-align: center;
    line-height: 29px;
}
.page-total {
    margin: 10px 0 26px;
    color: #0b5cb5;
    line-height: 16px;
}
.chev {
    width: 12px;
    height: 8px;
    fill: none;
    stroke: #999;
    stroke-width: 2;
}
.down {
    margin-top: 26px;
}
.line {
    width: 33px;
    height: 1px;
    margin: 13px 0 10px;
    background: #ddd;
}
.ric + .ric {
    margin-top: 16px;
}

/* taskbar */
.taskbar {
    height: 40px;
    flex: none;
    display: flex;
    background: linear-gradient(90deg, #0b1f1e 0%, #07131b 20%, #040b19 40%, #09061a 70%, #0d0213 100%);
}
.sys {
    width: 48px;
    display: flex;
    align-items: center;
    justify-content: center;
}
.apps {
    display: flex;
    margin-left: 2px;
}
.app {
    width: 49px;
    display: flex;
    justify-content: center;
    padding-top: 8px;
    background: linear-gradient(#76b9ed, #76b9ed) no-repeat center bottom / 0 2px;
}
.app svg {
    width: 24px;
    height: 24px;
}
.open {
    background-size: 40px 2px;
}
.multi {
    background-image: linear-gradient(90deg, #76b9ed 80%, #5384ac 80%);
}
.current {
    background-color: #39444a;
    background-size: 100% 2px;
}
.tray {
    display: flex;
    align-items: center;
    margin-left: auto;
    gap: 10px;
    color: #fff;
    font-family: "Open Sans", "Noto Sans", sans-serif;
    font-size: 12px;
    letter-spacing: -0.45px;
    border-right: 1px solid #555;
    margin-right: 4px;
    padding-right: 6px;
}
.tray svg + svg {
    margin-left: -2px;
}
.lang {
    letter-spacing: -0.2px;
}
.clock {
    text-align: center;
    line-height: 18px;
    margin-left: 1px;
}
```
